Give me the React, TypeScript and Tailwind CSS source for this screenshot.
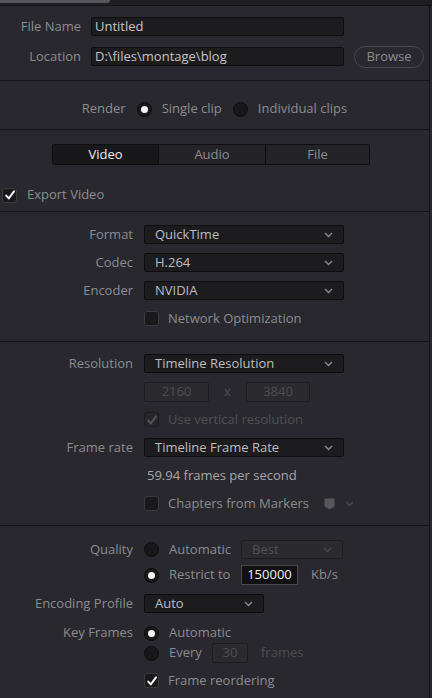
import React from 'react';

const font = { fontFamily: '"Open Sans", "Liberation Sans", sans-serif' };

const Chevron: React.FC<{ dim?: boolean }> = ({ dim }) => (
  <svg width="9" height="6" viewBox="0 0 9 6" className="shrink-0">
    <path d="M1 1 L4.5 4.5 L8 1" fill="none" stroke={dim ? '#4a4a4e' : '#8e8e92'} strokeWidth="1.3" />
  </svg>
);

const Check: React.FC<{ dim?: boolean }> = ({ dim }) => (
  <svg width="12" height="12" viewBox="0 0 12 12">
    <path d="M2.2 6.6 L4.8 9.4 L10 2.4" fill="none" stroke={dim ? '#55555a' : '#f2f2f2'} strokeWidth="2" strokeLinecap="round" strokeLinejoin="round" />
  </svg>
);

const Checkbox: React.FC<{ checked?: boolean; dim?: boolean }> = ({ checked, dim }) => (
  <div
    className={`flex h-[15px] w-[15px] shrink-0 items-center justify-center rounded-[3px] border ${
      dim ? 'border-[#1c1c1f] bg-[#26262b]' : 'border-[#3b3b40] bg-[#19191c]'
    }`}
  >
    {checked && <Check dim={dim} />}
  </div>
);

const Radio: React.FC<{ on?: boolean }> = ({ on }) => (
  <div className="flex h-[15px] w-[15px] shrink-0 items-center justify-center rounded-full border border-[#0c0c0e] bg-[#18181b]">
    {on && <div className="h-[7px] w-[7px] rounded-full bg-[#f4f4f4]" />}
  </div>
);

const Select: React.FC<{ value: string; w: string; dim?: boolean }> = ({ value, w, dim }) => (
  <div
    className={`flex h-[19px] ${w} items-center justify-between rounded-[2px] border pl-[10px] pr-[10px] ${
      dim ? 'border-[#1d1d20] bg-[#2a2a2f] text-[#505054]' : 'border-[#0e0e10] bg-[#1c1c1f] text-[#bdbdc0]'
    }`}
  >
    <span className="leading-none">{value}</span>
    <Chevron dim={dim} />
  </div>
);

const Label: React.FC<{ children: React.ReactNode; w?: string }> = ({ children, w = 'w-[133px]' }) => (
  <div className={`${w} shrink-0 text-right text-[#8c8c90]`}>{children}</div>
);

const Sep = () => <div className="h-px w-full bg-[#141416]" />;

export default function App() {
  return (
    <div className="min-h-[698px] w-[432px] bg-[#28282e] text-[13px]" style={font}>
      {/* top strip */}
      <div className="flex h-[6px] w-full border-b border-[#141416] bg-[#1f1f23]">
        <div className="h-[3px] w-[110px] rounded-br-[3px] bg-[#56585d]" />
      </div>

      <div className="w-[430px] border-r border-[#141416]">
        {/* file name / location */}
        <div className="flex flex-col gap-[11px] pt-[11px] pb-[14px]">
          <div className="flex h-[19px] items-center">
            <Label w="w-[81px]">File Name</Label>
            <div className="ml-[10px] flex h-[19px] w-[253px] items-center rounded-[2px] border border-[#0e0e10] bg-[#1c1c1f] pl-[3px] text-[#c4c4c7]">
              Untitled
            </div>
          </div>
          <div className="flex h-[19px] items-center">
            <Label w="w-[81px]">Location</Label>
            <div className="ml-[10px] flex h-[19px] w-[253px] items-center rounded-[2px] border border-[#0e0e10] bg-[#1c1c1f] pl-[3px] text-[#c4c4c7]">
              D:\files\montage\blog
            </div>
            <div className="ml-[10px] flex h-[22px] w-[70px] items-center justify-center rounded-full border border-[#47474c] text-[#8c8c90]">
              Browse
            </div>
          </div>
        </div>
        <Sep />

        {/* render */}
        <div className="flex h-[20px] items-center justify-center mt-[18px] mb-[10px] text-[#8c8c90]">
          <span>Render</span>
          <div className="ml-[11px]">
            <Radio on />
          </div>
          <span className="ml-[10px]">Single clip</span>
          <div className="ml-[11px]">
            <Radio />
          </div>
          <span className="ml-[10px]">Individual clips</span>
        </div>
        <Sep />

        {/* tabs */}
        <div className="pt-[14px] pb-[6px]">
          <div className="ml-[52px] flex h-[21px] w-[318px] overflow-hidden rounded-[2px] border border-[#0e0e10]">
            <div className="flex w-[105px] items-center justify-center bg-[#18181b] text-[#ececee]">Video</div>
            <div className="flex w-[107px] items-center justify-center border-l border-[#0e0e10] bg-[#242428] text-[#8c8c90]">
              Audio
            </div>
            <div className="flex flex-1 items-center justify-center border-l border-[#0e0e10] bg-[#242428] text-[#8c8c90]">
              File
            </div>
          </div>
          <div className="mt-[20px] flex h-[20px] items-center pl-[2px] text-[#8c8c90]">
            <Checkbox checked />
            <span className="ml-[10px]">Export Video</span>
          </div>
        </div>
        <Sep />

        {/* format */}
        <div className="flex flex-col gap-[9px] pt-[13px] pb-[13px]">
          <div className="flex h-[19px] items-center">
            <Label>Format</Label>
            <div className="ml-[11px]">
              <Select value="QuickTime" w="w-[200px]" />
            </div>
          </div>
          <div className="flex h-[19px] items-center">
            <Label>Codec</Label>
            <div className="ml-[11px]">
              <Select value="H.264" w="w-[200px]" />
            </div>
          </div>
          <div className="flex h-[19px] items-center">
            <Label>Encoder</Label>
            <div className="ml-[11px]">
              <Select value="NVIDIA" w="w-[200px]" />
            </div>
          </div>
          <div className="flex h-[19px] items-center pl-[144px] text-[#8c8c90]">
            <Checkbox />
            <span className="ml-[9px]">Network Optimization</span>
          </div>
        </div>
        <Sep />

        {/* resolution */}
        <div className="flex flex-col gap-[9px] pt-[12px] pb-[12px]">
          <div className="flex h-[19px] items-center">
            <Label>Resolution</Label>
            <div className="ml-[11px]">
              <Select value="Timeline Resolution" w="w-[200px]" />
            </div>
          </div>
          <div className="flex h-[19px] items-center pl-[144px] text-[#4e4e52]">
            <div className="flex h-[20px] w-[65px] items-center justify-center rounded-[2px] border border-[#1d1d20] bg-[#2a2a2f]">
              2160
            </div>
            <span className="w-[37px] text-center">x</span>
            <div className="flex h-[20px] w-[64px] items-center justify-center rounded-[2px] border border-[#1d1d20] bg-[#2a2a2f]">
              3840
            </div>
          </div>
          <div className="flex h-[19px] items-center pl-[144px] text-[#505054]">
            <Checkbox checked dim />
            <span className="ml-[9px]">Use vertical resolution</span>
          </div>
          <div className="flex h-[19px] items-center">
            <Label>Frame rate</Label>
            <div className="ml-[11px]">
              <Select value="Timeline Frame Rate" w="w-[200px]" />
            </div>
          </div>
          <div className="flex h-[19px] items-center pl-[147px] text-[#a6a6aa]">59.94 frames per second</div>
          <div className="flex h-[19px] items-center pl-[144px] text-[#8c8c90]">
            <Checkbox />
            <span className="ml-[9px]">Chapters from Markers</span>
            <svg width="11" height="12" viewBox="0 0 11 12" className="ml-[15px]">
              <path d="M1 0.5 H10 Q10.5 0.5 10.5 1 V8.5 L5.5 11.5 L0.5 8.5 V1 Q0.5 0.5 1 0.5 Z" fill="#56565b" />
            </svg>
            <div className="ml-[10px]">
              <Chevron dim />
            </div>
          </div>
        </div>
        <Sep />

        {/* quality */}
        <div className="pt-[14px] pb-[8px]">
          <div className="flex h-[19px] items-center">
            <Label>Quality</Label>
            <div className="ml-[11px]">
              <Radio />
            </div>
            <span className="ml-[10px] w-[72px] text-[#8c8c90]">Automatic</span>
            <Select value="Best" w="w-[102px]" dim />
          </div>
          <div className="mt-[6px] flex h-[20px] items-center pl-[144px]">
            <Radio on />
            <span className="ml-[10px] w-[72px] text-[#8c8c90]">Restrict to</span>
            <div className="flex h-[20px] w-[57px] items-center justify-center border border-[#48484c] bg-[#111113] text-[#f0f0f0]">
              150000
            </div>
            <span className="ml-[13px] text-[#8c8c90]">Kb/s</span>
          </div>
          <div className="mt-[9px] flex h-[19px] items-center">
            <Label>Encoding Profile</Label>
            <div className="ml-[11px]">
              <Select value="Auto" w="w-[120px]" />
            </div>
          </div>
          <div className="mt-[10px] flex h-[20px] items-center">
            <Label>Key Frames</Label>
            <div className="ml-[11px]">
              <Radio on />
            </div>
            <span className="ml-[10px] text-[#8c8c90]">Automatic</span>
          </div>
          <div className="flex h-[20px] items-center pl-[144px]">
            <Radio />
            <span className="ml-[10px] w-[43px] text-[#8c8c90]">Every</span>
            <div className="flex h-[20px] w-[36px] items-center justify-center rounded-[2px] border border-[#1d1d20] bg-[#2a2a2f] text-[#4e4e52]">
              30
            </div>
            <span className="ml-[13px] text-[#4e4e52]">frames</span>
          </div>
          <div className="mt-[8px] flex h-[19px] items-center pl-[144px] text-[#8c8c90]">
            <Checkbox checked />
            <span className="ml-[9px]">Frame reordering</span>
          </div>
        </div>
      </div>
    </div>
  );
}
